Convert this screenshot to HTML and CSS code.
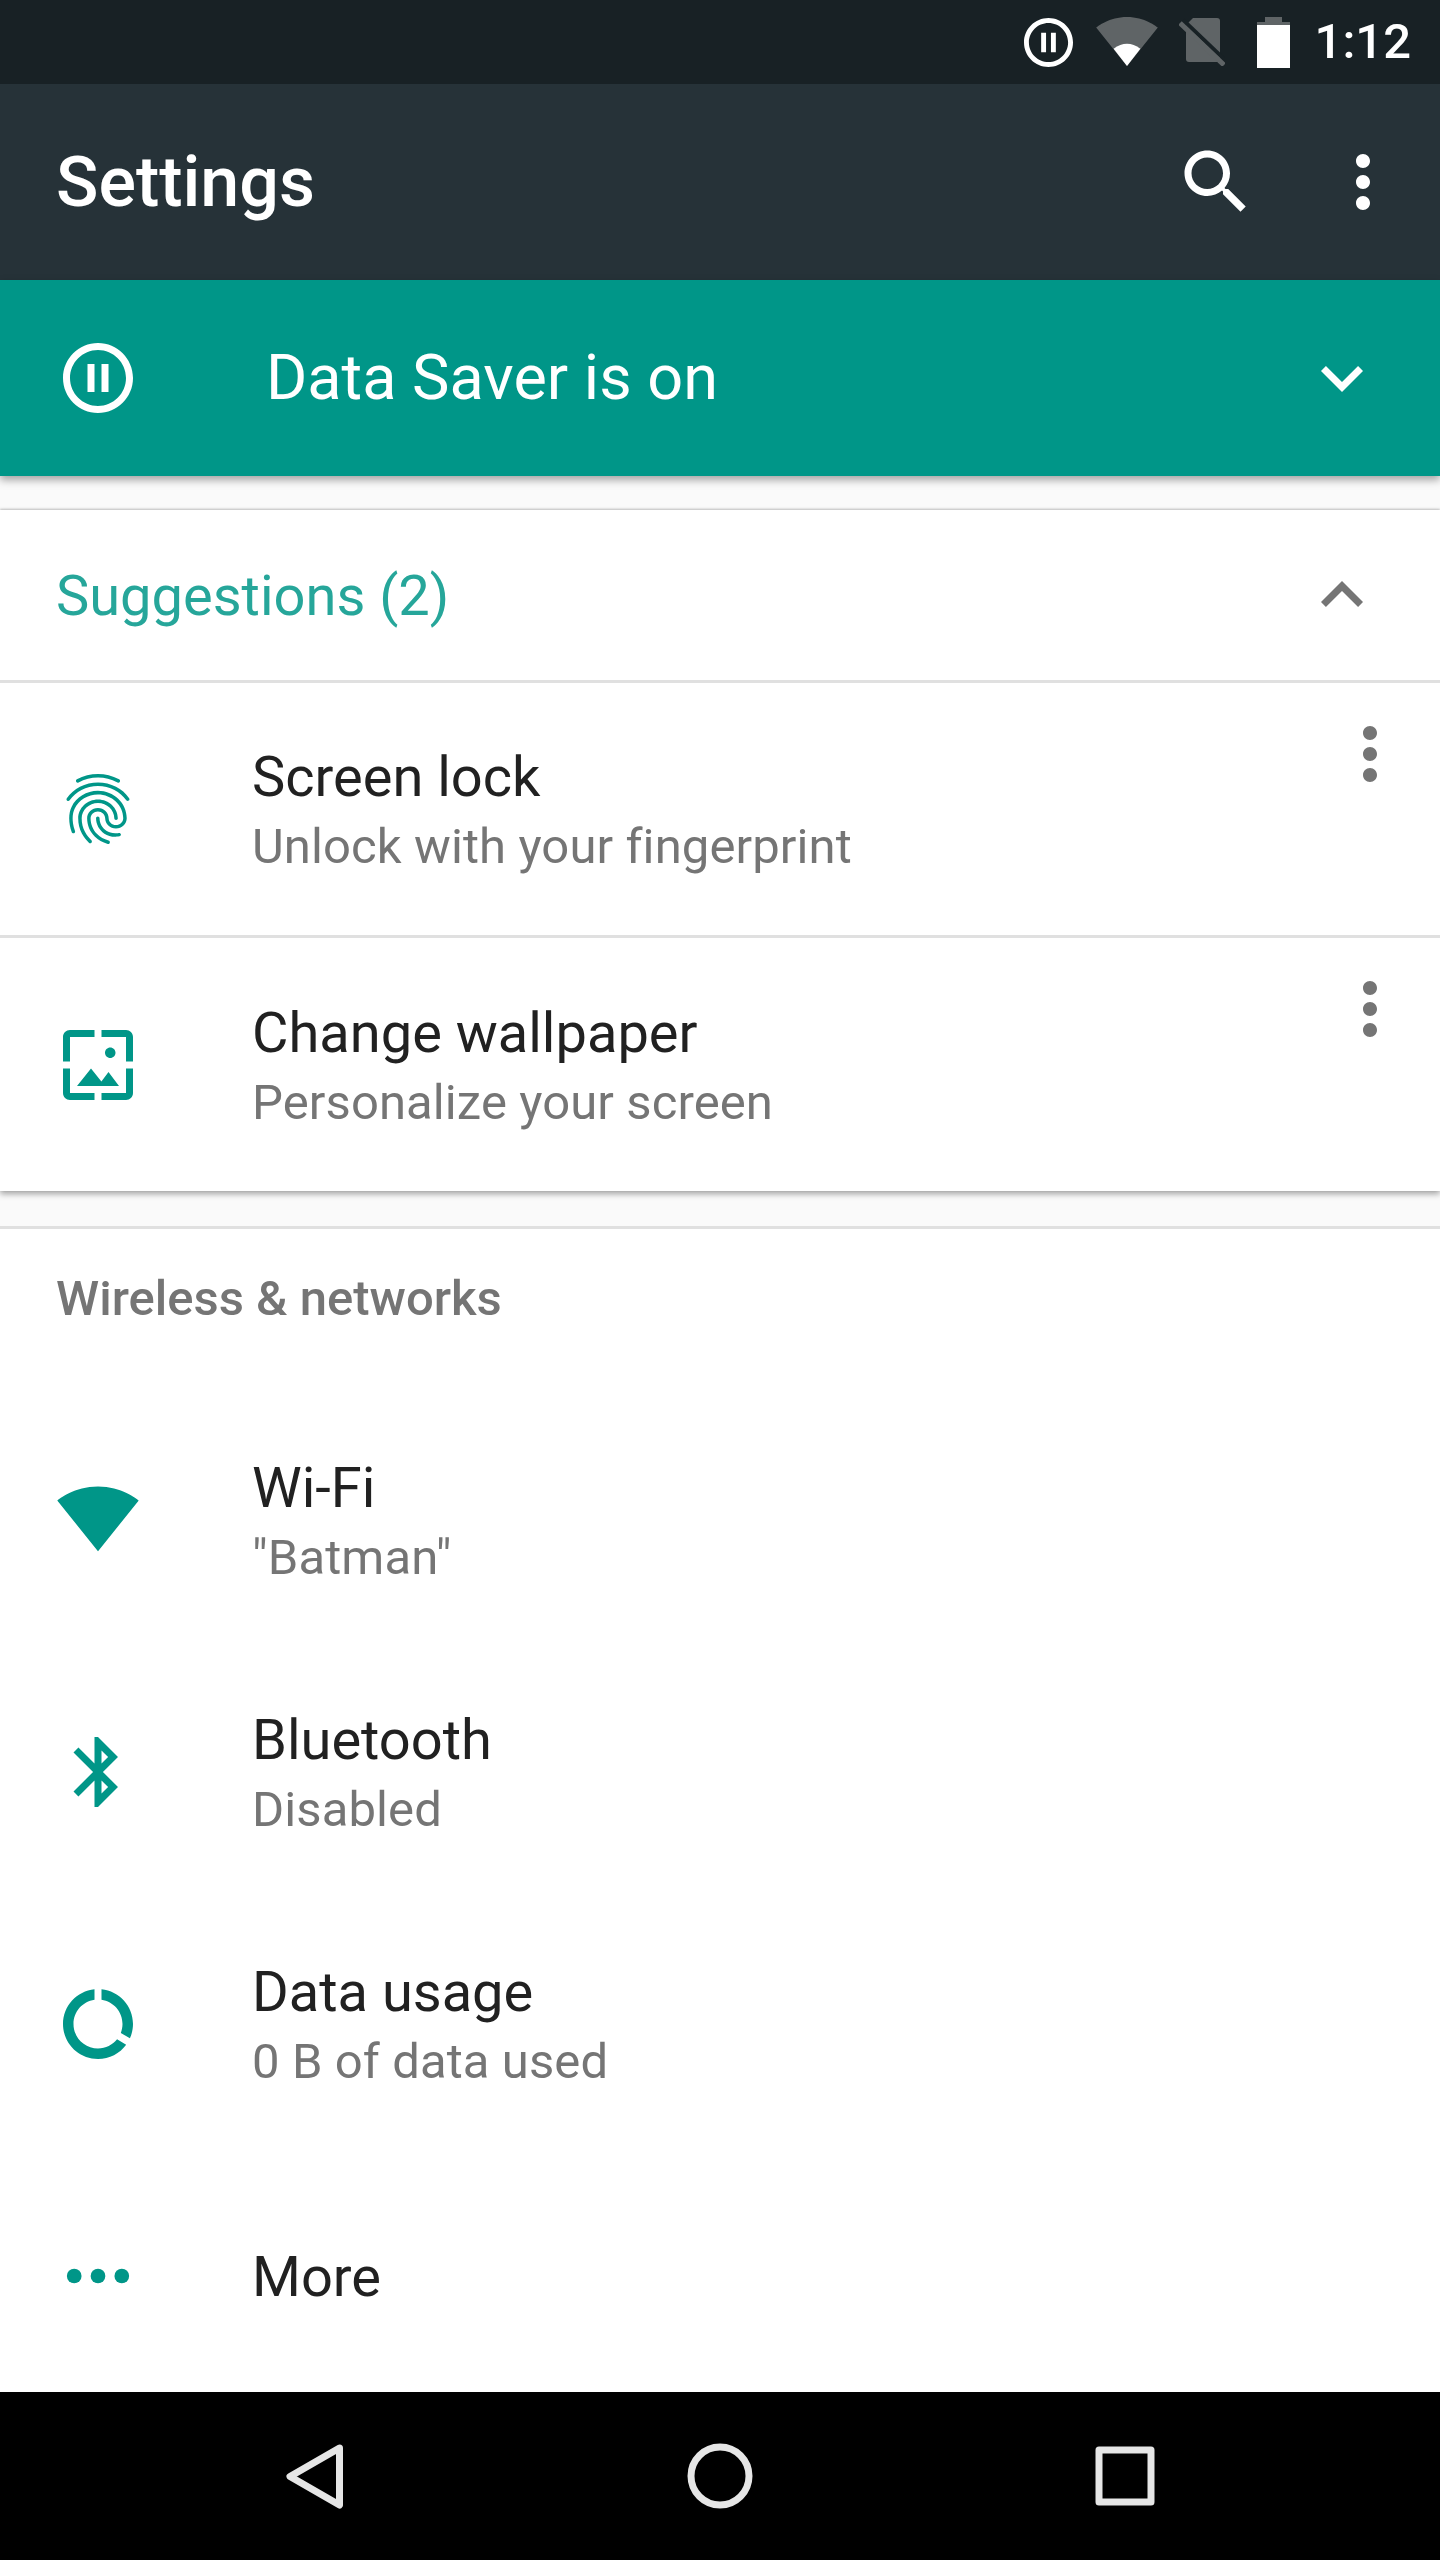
FILE: index.html
```html
<!DOCTYPE html>
<html lang="en">
<head>
    <meta charset="UTF-8">
    <meta name="viewport" content="width=device-width, initial-scale=1.0">
    <title>Settings</title>
    <link rel="stylesheet" href="styles.css">
</head>
<body>
    <div class="screen">
        <div class="status-bar">
            <svg class="st-pause" viewBox="2 2 20 20"><path fill="#fff" d="M9 16h2V8H9v8zm3-14C6.48 2 2 6.48 2 12s4.48 10 10 10 10-4.48 10-10S17.52 2 12 2zm0 18c-4.41 0-8-3.59-8-8s3.59-8 8-8 8 3.59 8 8-3.59 8-8 8zm1-4h2V8h-2v8z"/></svg>
            <svg class="st-wifi" viewBox="0.36 3 23.28 18.5"><path fill="#5f6466" d="M12.01 21.49L23.64 7c-.45-.34-4.93-4-11.64-4C5.28 3 .81 6.66.36 7l11.63 14.49.01.01.01-.01z"/><path fill="#fff" d="M12 21.49L6.95 15Q12 11.2 17.05 15Z"/></svg>
            <svg class="st-sim" viewBox="0 0 46 48"><path fill="#5f6466" d="M14 0H38a3 3 0 0 1 3 3V41a3 3 0 0 1-3 3H10a3 3 0 0 1-3-3V7Z"/><path stroke="#182125" stroke-width="4" d="M4 2L48 44"/><path stroke="#5f6466" stroke-width="5" d="M1 5L45 47"/></svg>
            <svg class="st-battery" viewBox="0 0 33 51"><path fill="#5f6466" d="M8 0H25V5H33V9H0V5H8Z"/><rect fill="#fff" x="0" y="8" width="33" height="43"/></svg>
            <span class="clock">1:12</span>
        </div>

        <div class="toolbar">
            <h1>Settings</h1>
            <svg class="icon" viewBox="0 0 24 24"><path fill="#fff" d="M15.5 14h-.79l-.28-.27C15.41 12.59 16 11.11 16 9.5 16 5.91 13.09 3 9.5 3S3 5.91 3 9.5 5.91 16 9.5 16c1.61 0 3.09-.59 4.23-1.57l.27.28v.79l5 4.99L20.49 19l-4.99-5zm-6 0C7.01 14 5 11.99 5 9.5S7.01 5 9.5 5 14 7.01 14 9.5 11.99 14 9.5 14z"/></svg>
            <svg class="icon" viewBox="0 0 24 24"><path fill="#fff" d="M12 8c1.1 0 2-.9 2-2s-.9-2-2-2-2 .9-2 2 .9 2 2 2zm0 2c-1.1 0-2 .9-2 2s.9 2 2 2 2-.9 2-2-.9-2-2-2zm0 6c-1.1 0-2 .9-2 2s.9 2 2 2 2-.9 2-2-.9-2-2-2z"/></svg>
        </div>

        <div class="banner">
            <svg class="icon" viewBox="0 0 24 24"><path fill="#fff" d="M9 16h2V8H9v8zm3-14C6.48 2 2 6.48 2 12s4.48 10 10 10 10-4.48 10-10S17.52 2 12 2zm0 18c-4.41 0-8-3.59-8-8s3.59-8 8-8 8 3.59 8 8-3.59 8-8 8zm1-4h2V8h-2v8z"/></svg>
            <span class="banner-text">Data Saver is on</span>
            <svg class="icon" viewBox="0 0 24 24"><path fill="#fff" d="M16.59 8.59L12 13.17 7.41 8.59 6 10l6 6 6-6z"/></svg>
        </div>

        <div class="content">
            <div class="card">
                <div class="card-head">
                    <span class="card-title">Suggestions (2)</span>
                    <svg class="icon" viewBox="0 0 24 24"><path fill="#757575" d="M12 8l-6 6 1.41 1.41L12 10.83l4.59 4.58L18 14z"/></svg>
                </div>
                <div class="row card-row">
                    <svg class="icon teal" viewBox="0 0 24 24"><path d="M17.81 4.47c-.08 0-.16-.02-.23-.06C15.66 3.42 14 3 12.01 3c-1.98 0-3.86.47-5.57 1.41-.24.13-.54.04-.68-.2-.13-.24-.04-.55.2-.68C7.82 2.52 9.86 2 12.01 2c2.13 0 3.99.47 6.03 1.52.25.13.34.43.21.67-.09.18-.26.28-.44.28zM3.5 9.72c-.1 0-.2-.03-.29-.09-.23-.16-.28-.47-.12-.7.99-1.4 2.25-2.5 3.75-3.27C9.98 4.04 14 4.03 17.15 5.65c1.5.77 2.76 1.86 3.75 3.25.16.22.11.54-.12.7-.23.16-.54.11-.7-.12-.9-1.26-2.04-2.25-3.39-2.94-2.87-1.47-6.54-1.47-9.4.01-1.36.7-2.5 1.7-3.4 2.96-.08.14-.23.21-.39.21zm6.25 12.07c-.13 0-.26-.05-.35-.15-.87-.87-1.34-1.43-2.01-2.64-.69-1.23-1.05-2.73-1.05-4.34 0-2.97 2.54-5.39 5.66-5.39s5.66 2.42 5.66 5.39c0 .28-.22.5-.5.5s-.5-.22-.5-.5c0-2.42-2.09-4.39-4.66-4.39-2.57 0-4.66 1.97-4.66 4.39 0 1.44.32 2.77.93 3.85.64 1.15 1.08 1.64 1.85 2.42.19.2.19.51 0 .71-.11.1-.24.15-.37.15zm7.17-1.85c-1.19 0-2.24-.3-3.1-.89-1.49-1.01-2.38-2.65-2.38-4.39 0-.28.22-.5.5-.5s.5.22.5.5c0 1.41.72 2.74 1.94 3.56.71.48 1.54.71 2.54.71.24 0 .64-.03 1.04-.1.27-.05.53.13.58.41.05.27-.13.53-.41.58-.57.11-1.07.12-1.21.12zM14.91 22c-.04 0-.09-.01-.13-.02-1.59-.44-2.63-1.03-3.72-2.1-1.4-1.39-2.17-3.24-2.17-5.22 0-1.62 1.38-2.94 3.08-2.94 1.7 0 3.08 1.32 3.08 2.94 0 1.07.93 1.94 2.08 1.94s2.08-.87 2.08-1.94c0-3.77-3.25-6.83-7.25-6.83-2.84 0-5.44 1.58-6.61 4.03-.39.81-.59 1.76-.59 2.8 0 .78.07 2.01.67 3.61.1.26-.03.55-.29.64-.26.1-.55-.04-.64-.29-.49-1.31-.73-2.61-.73-3.96 0-1.2.23-2.29.68-3.24 1.33-2.79 4.28-4.6 7.51-4.6 4.55 0 8.25 3.51 8.25 7.83 0 1.62-1.38 2.94-3.08 2.94s-3.08-1.32-3.08-2.94c0-1.07-.93-1.94-2.08-1.94s-2.08.87-2.08 1.94c0 1.71.66 3.31 1.87 4.51.95.94 1.86 1.46 3.27 1.85.27.07.42.35.35.61-.05.23-.26.38-.47.38z"/></svg>
                    <div class="row-text">
                        <div class="title">Screen lock</div>
                        <div class="summary">Unlock with your fingerprint</div>
                    </div>
                    <svg class="icon row-menu" viewBox="0 0 24 24"><path fill="#757575" d="M12 8c1.1 0 2-.9 2-2s-.9-2-2-2-2 .9-2 2 .9 2 2 2zm0 2c-1.1 0-2 .9-2 2s.9 2 2 2 2-.9 2-2-.9-2-2-2zm0 6c-1.1 0-2 .9-2 2s.9 2 2 2 2-.9 2-2-.9-2-2-2z"/></svg>
                </div>
                <div class="row card-row last-row">
                    <svg class="icon teal" viewBox="0 0 24 24"><path d="M4 4h7V2H4c-1.1 0-2 .9-2 2v7h2V4zm6 9l-4 5h12l-3-4-2.03 2.71L10 13zm7-4.5c0-.83-.67-1.5-1.5-1.5S14 7.67 14 8.5s.67 1.5 1.5 1.5S17 9.33 17 8.5zM20 2h-7v2h7v7h2V4c0-1.1-.9-2-2-2zm0 18h-7v2h7c1.1 0 2-.9 2-2v-7h-2v7zM4 13H2v7c0 1.1.9 2 2 2h7v-2H4v-7z"/></svg>
                    <div class="row-text">
                        <div class="title">Change wallpaper</div>
                        <div class="summary">Personalize your screen</div>
                    </div>
                    <svg class="icon row-menu" viewBox="0 0 24 24"><path fill="#757575" d="M12 8c1.1 0 2-.9 2-2s-.9-2-2-2-2 .9-2 2 .9 2 2 2zm0 2c-1.1 0-2 .9-2 2s.9 2 2 2 2-.9 2-2-.9-2-2-2zm0 6c-1.1 0-2 .9-2 2s.9 2 2 2 2-.9 2-2-.9-2-2-2z"/></svg>
                </div>
            </div>

            <div class="section">
                <h2>Wireless &amp; networks</h2>
                <div class="row">
                    <svg class="icon teal wifi-icon" viewBox="0 0 24 24"><path d="M12.01 21.49L23.64 7c-.45-.34-4.93-4-11.64-4C5.28 3 .81 6.66.36 7l11.63 14.49.01.01.01-.01z"/></svg>
                    <div class="row-text">
                        <div class="title">Wi-Fi</div>
                        <div class="summary">"Batman"</div>
                    </div>
                </div>
                <div class="row">
                    <svg class="icon teal" viewBox="0 0 24 24"><path d="M17.71 7.71L12 2h-1v7.59L6.41 5 5 6.41 10.59 12 5 17.59 6.41 19 11 14.41V22h1l5.71-5.71-4.3-4.29 4.3-4.29zM13 5.83l1.88 1.88L13 9.59V5.83zm1.88 10.46L13 18.17v-3.76l1.88 1.88z"/></svg>
                    <div class="row-text">
                        <div class="title">Bluetooth</div>
                        <div class="summary">Disabled</div>
                    </div>
                </div>
                <div class="row">
                    <svg class="icon teal" viewBox="0 0 24 24"><path d="M13 2.05v3.03c3.39.49 6 3.39 6 6.92 0 .9-.18 1.75-.48 2.54l2.6 1.53c.56-1.24.88-2.62.88-4.07 0-5.18-3.95-9.45-9-9.95zM12 19c-3.87 0-7-3.13-7-7 0-3.53 2.61-6.43 6-6.92V2.05c-5.06.5-9 4.76-9 9.95 0 5.52 4.47 10 9.99 10 3.31 0 6.24-1.61 8.06-4.09l-2.6-1.53C16.17 17.98 14.21 19 12 19z"/></svg>
                    <div class="row-text">
                        <div class="title">Data usage</div>
                        <div class="summary">0 B of data used</div>
                    </div>
                </div>
                <div class="row">
                    <svg class="icon teal" viewBox="0 0 24 24"><circle cx="5.2" cy="12" r="2.1"/><circle cx="12" cy="12" r="2.1"/><circle cx="18.8" cy="12" r="2.1"/></svg>
                    <div class="row-text more-text">
                        <div class="title">More</div>
                    </div>
                </div>
            </div>
        </div>

        <div class="nav-bar">
            <svg class="icon" viewBox="0 0 84 84"><path class="nav-stroke" d="M66.5 14L17 42.5L66.5 71Z"/></svg>
            <svg class="icon" viewBox="0 0 84 84"><circle class="nav-stroke" cx="42" cy="42" r="29"/></svg>
            <svg class="icon" viewBox="0 0 84 84"><rect class="nav-stroke" x="16" y="16" width="52" height="52"/></svg>
        </div>
    </div>
</body>
</html>
```

FILE: styles.css
```css
* {
    box-sizing: border-box;
}

body {
    margin: 0;
    font-family: Roboto, "Noto Sans", sans-serif;
    background: #fff;
}

h1, h2 {
    margin: 0;
}

.screen {
    width: 1440px;
    height: 2560px;
    display: flex;
    flex-direction: column;
    overflow: hidden;
}

.icon {
    width: 84px;
    height: 84px;
    flex: none;
    display: block;
}

.teal {
    fill: #009688;
}

/* status bar */
.status-bar {
    height: 84px;
    flex: none;
    background: #182125;
    display: flex;
    align-items: center;
    justify-content: flex-end;
    padding-right: 29px;
}

.st-pause {
    width: 49px;
    height: 49px;
    margin-right: 23px;
}

.st-wifi {
    width: 62px;
    height: 49px;
    margin-right: 21px;
    margin-top: -1px;
}

.st-sim {
    width: 46px;
    height: 48px;
    margin-right: 32px;
}

.st-battery {
    width: 33px;
    height: 51px;
    margin-right: 25px;
}

.clock {
    color: #fff;
    font-size: 49px;
    font-weight: 500;
    line-height: 84px;
}

/* toolbar */
.toolbar {
    height: 196px;
    flex: none;
    background: #263238;
    display: flex;
    align-items: center;
    gap: 63px;
    padding: 0 35px 0 56px;
}

.toolbar h1 {
    flex: 1;
    color: #fff;
    font-size: 70px;
    font-weight: 500;
}

/* data saver */
.banner {
    height: 196px;
    flex: none;
    background: #009688;
    display: flex;
    align-items: center;
    padding: 0 56px;
    box-shadow: 0 4px 8px rgba(0, 0, 0, 0.35);
    position: relative;
    z-index: 2;
}

.banner-text {
    flex: 1;
    margin-left: 126px;
    color: #fff;
    font-size: 63px;
    line-height: 72px;
}

/* content */
.content {
    flex: 1;
    min-height: 0;
    overflow: hidden;
    background: #fafafa;
    padding-top: 34px;
}

.card {
    background: #fff;
    box-shadow: 0 -1px 2px rgba(0, 0, 0, 0.2), 0 3px 6px rgba(0, 0, 0, 0.35);
    position: relative;
}

.card-head {
    height: 170px;
    display: flex;
    align-items: center;
    padding: 0 56px;
}

.card-title {
    flex: 1;
    color: #26a69a;
    font-size: 56px;
    padding-top: 1px;
}

.row {
    height: 252px;
    display: flex;
    align-items: center;
    padding: 0 28px 0 56px;
}

.card-row {
    height: 255px;
    border-top: 3px solid #e0e0e0;
}

.last-row {
    height: 256px;
}

.row-text {
    flex: 1;
    margin-left: 112px;
    padding-top: 5px;
}

.more-text {
    padding-top: 3px;
}

.title {
    color: #212121;
    font-size: 56px;
    line-height: 71px;
}

.summary {
    color: #757575;
    font-size: 49px;
    line-height: 68px;
    letter-spacing: 0.1px;
}

.row-menu {
    align-self: flex-start;
    margin-top: 29px;
}

.wifi-icon {
    margin-bottom: 4px;
}

.section {
    margin-top: 35px;
    background: #fff;
    border-top: 3px solid #e0e0e0;
}

.section h2 {
    height: 165px;
    padding: 40px 0 0 56px;
    color: #757575;
    font-size: 49px;
    font-weight: 500;
    line-height: 60px;
}

/* nav bar */
.nav-bar {
    height: 168px;
    flex: none;
    background: #000;
    display: flex;
    align-items: center;
    justify-content: center;
    gap: 321px;
}

.nav-stroke {
    fill: none;
    stroke: #e6e6e6;
    stroke-width: 7;
    stroke-linejoin: round;
}
```
